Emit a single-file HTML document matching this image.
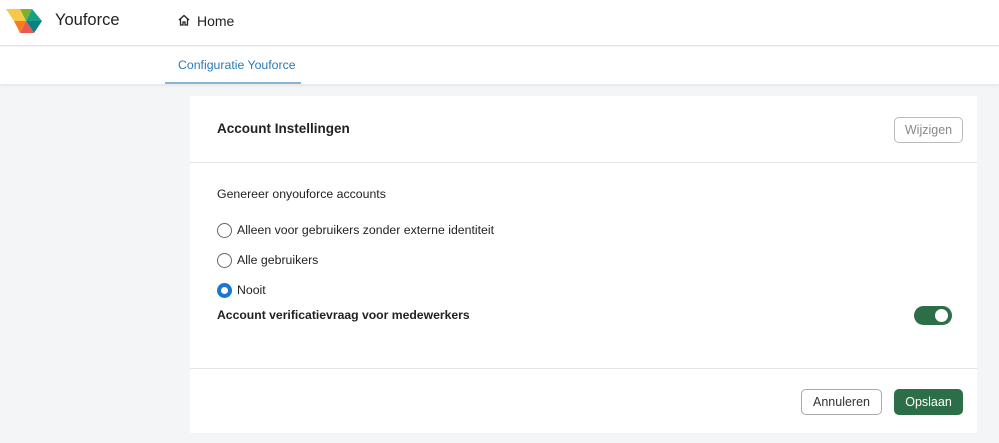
<!DOCTYPE html>
<html><head><meta charset="utf-8"><style>
*{margin:0;padding:0;box-sizing:border-box}
body{width:999px;height:443px;background:#f4f5f7;font-family:"Liberation Sans",sans-serif;color:#222;position:relative;overflow:hidden}
.hdr{position:absolute;left:0;top:0;width:999px;height:46px;background:#fff;border-bottom:1px solid #e2e2e2}
.tabs{position:absolute;left:0;top:47px;width:999px;height:37px;background:#fff;box-shadow:0 2px 3px rgba(0,0,0,.06)}
.abs{position:absolute;white-space:nowrap}
.card{position:absolute;left:190px;top:96px;width:787px;height:337px;background:#fff}
.radio{position:absolute;left:217px;width:15px;height:15px;border:1.5px solid #666;border-radius:50%}
.btn{position:absolute;height:26px;border-radius:5px;font-size:12.5px;text-align:center;line-height:24px}
.t{font-size:12.3px}
</style></head><body>
<div class="hdr">
<svg class="abs" style="left:6px;top:7px" width="38" height="28" viewBox="0 0 38 28">
<polygon points="0,2 14,2 20,14 8,14" fill="#f5c84a"/>
<polygon points="14,2 26,2 20,14" fill="#7ab22e"/>
<polygon points="26,2 36,14 20,14" fill="#16a085"/>
<polygon points="20,14 36,14 28,26" fill="#0e7f86"/>
<polygon points="8,14 20,14 14,26" fill="#f57c1f"/>
<polygon points="20,14 28,26 14,26" fill="#ea5a4e"/>
</svg>
<div class="abs" style="left:55px;top:11px;font-size:16.5px;color:#222">Youforce</div>
<svg class="abs" style="left:178px;top:14px" width="12" height="12" viewBox="0 0 12 12"><path d="M1 6 L6 1.5 L11 6 M2.5 5 V11 H5 V8 H7 V11 H9.5 V5" fill="none" stroke="#222" stroke-width="1.3"/></svg>
<div class="abs" style="left:197px;top:13px;font-size:14px">Home</div>
</div>
<div class="tabs">
<div class="abs" style="left:178px;top:11px;font-size:12.3px;color:#2a7ab8">Configuratie Youforce</div>
<div class="abs" style="left:165px;top:35px;width:136px;height:2px;background:#8ab4d6"></div>
</div>
<div class="card">
<div class="abs" style="left:27px;top:25px;font-size:13.5px;font-weight:bold">Account Instellingen</div>
<div class="btn" style="left:704px;top:21px;width:69px;border:1px solid #bbb;color:#888">Wijzigen</div>
<div class="abs" style="left:0;top:66px;width:787px;height:1px;background:#e4e4e4"></div>
<div class="abs t" style="left:27px;top:91px">Genereer onyouforce accounts</div>
<div class="abs t" style="left:47px;top:127px">Alleen voor gebruikers zonder externe identiteit</div>
<div class="abs t" style="left:47px;top:157px">Alle gebruikers</div>
<div class="abs t" style="left:47px;top:187px">Nooit</div>
<div class="abs" style="left:27px;top:212px;font-size:12.2px;font-weight:bold">Account verificatievraag voor medewerkers</div>
<div class="abs" style="left:724px;top:210px;width:38px;height:19px;border-radius:10px;background:#2b6e47"><div class="abs" style="left:21px;top:3px;width:13px;height:13px;border-radius:50%;background:#fff"></div></div>
<div class="abs" style="left:0;top:272px;width:787px;height:1px;background:#e4e4e4"></div>
<div class="btn" style="left:611px;top:293px;width:81px;border:1px solid #aaa;color:#333">Annuleren</div>
<div class="btn" style="left:704px;top:293px;width:69px;background:#2b6e47;color:#fff;line-height:26px">Opslaan</div>
</div>
<div class="radio" style="top:223px"></div>
<div class="radio" style="top:253px"></div>
<div class="radio" style="top:283px;border:4.5px solid #1976d2"></div>
</body></html>
